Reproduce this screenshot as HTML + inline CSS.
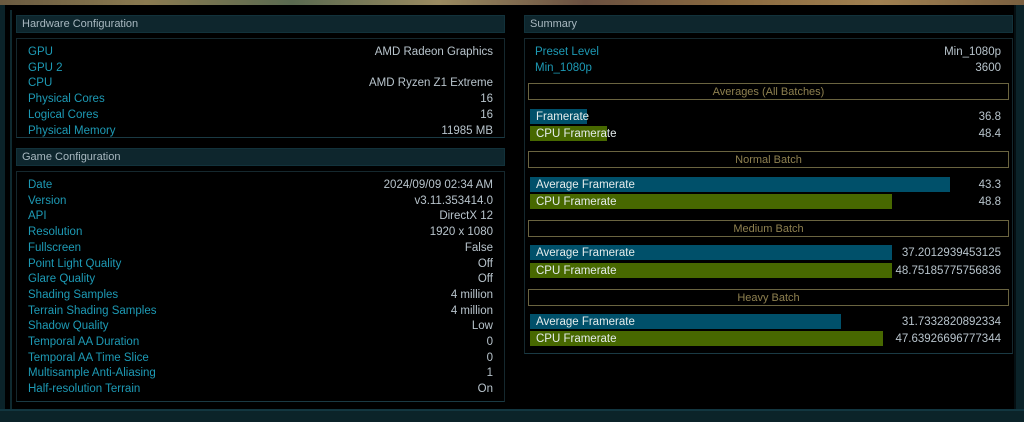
<!DOCTYPE html><html><head><style>
*{margin:0;padding:0;box-sizing:border-box}
body{width:1024px;height:422px;background:#0b2329;position:relative;overflow:hidden;font-family:"Liberation Sans",sans-serif;font-size:11.5px}
.top{position:absolute;left:0;top:0;width:1024px;height:5px;background:linear-gradient(90deg,#6a5a40,#8a7a50,#5a6a50,#9a8a60,#6a5040,#8a6a40,#a08050,#7a6040)}
.main{position:absolute;left:5px;top:5px;width:1009px;height:404px;background:#000}
.vl{position:absolute;left:10px;top:10px;width:2px;height:400px;background:#0f2a30}
.hdr{position:absolute;height:18px;background:#0e262d;border:1px solid #12323b;color:#a8b8c0;padding-left:5px;line-height:17px;font-size:11px}
.box{position:absolute;border:1px solid #15282e;border-bottom-color:#1a3a44}
.row{position:absolute;height:15px;line-height:15px}
.l{color:#1d9ab5}.v{color:#b8c4cc;text-align:right}
.sec{position:absolute;left:528px;width:481px;height:17px;border:1px solid #6a6440;color:#8e8050;text-align:center;line-height:16px;font-size:11px}
.bar{position:absolute;left:530px;height:15px;color:#e4ecec;line-height:16px;padding-left:6px;white-space:nowrap}
.b{background:#00506a}.g{background:#476800}
.rv{position:absolute;right:23px;color:#b8c4cc;height:15px;line-height:16px}
</style></head><body>
<div class="top"></div>
<div class="main"></div>
<div class="vl"></div>
<div class="hdr" style="left:16px;top:15px;width:489px">Hardware Configuration</div>
<div class="box" style="left:16px;top:38px;width:489px;height:100px"></div>
<div class="hdr" style="left:16px;top:148px;width:489px">Game Configuration</div>
<div class="box" style="left:16px;top:171px;width:489px;height:231px"></div>
<div class="hdr" style="left:524px;top:15px;width:489px">Summary</div>
<div class="box" style="left:524px;top:38px;width:489px;height:316px"></div>
<div id="L"></div>
<div class="row l" style="left:535px;top:45px">Preset Level</div><div class="rv" style="top:44px">Min_1080p</div>
<div class="row l" style="left:535px;top:61px">Min_1080p</div><div class="rv" style="top:60px">3600</div>
<div class="sec" style="top:83px">Averages (All Batches)</div>
<div class="bar b" style="top:109px;width:57px">Framerate</div><div class="rv" style="top:109px">36.8</div>
<div class="bar g" style="top:126px;width:77px">CPU Framerate</div><div class="rv" style="top:126px">48.4</div>
<div class="sec" style="top:151px">Normal Batch</div>
<div class="bar b" style="top:177px;width:420px">Average Framerate</div><div class="rv" style="top:177px">43.3</div>
<div class="bar g" style="top:194px;width:362px">CPU Framerate</div><div class="rv" style="top:194px">48.8</div>
<div class="sec" style="top:220px">Medium Batch</div>
<div class="bar b" style="top:245px;width:362px">Average Framerate</div><div class="rv" style="top:245px">37.2012939453125</div>
<div class="bar g" style="top:263px;width:362px">CPU Framerate</div><div class="rv" style="top:263px">48.75185775756836</div>
<div class="sec" style="top:289px">Heavy Batch</div>
<div class="bar b" style="top:314px;width:311px">Average Framerate</div><div class="rv" style="top:314px">31.7332820892334</div>
<div class="bar g" style="top:331px;width:353px">CPU Framerate</div><div class="rv" style="top:331px">47.63926696777344</div>
<div style="position:absolute;left:0;top:409px;width:1024px;height:2px;background:#123640"></div>
<div style="position:absolute;left:1014px;top:5px;width:2px;height:404px;background:#050f12"></div>
<script>
var h=[["GPU","AMD Radeon Graphics"],["GPU 2",""],["CPU","AMD Ryzen Z1 Extreme"],["Physical Cores","16"],["Logical Cores","16"],["Physical Memory","11985 MB"]];
var g=[["Date","2024/09/09 02:34 AM"],["Version","v3.11.353414.0"],["API","DirectX 12"],["Resolution","1920 x 1080"],["Fullscreen","False"],["Point Light Quality","Off"],["Glare Quality","Off"],["Shading Samples","4 million"],["Terrain Shading Samples","4 million"],["Shadow Quality","Low"],["Temporal AA Duration","0"],["Temporal AA Time Slice","0"],["Multisample Anti-Aliasing","1"],["Half-resolution Terrain","On"]];
var s="";
function add(a,y0){a.forEach(function(r,i){var y=y0+i*15.7;s+='<div class="row l" style="left:28px;top:'+y+'px">'+r[0]+'</div><div class="row v" style="left:250px;width:243px;top:'+y+'px">'+r[1]+'</div>';});}
add(h,45);add(g,178);
document.getElementById("L").innerHTML=s;
</script>
</body></html>
